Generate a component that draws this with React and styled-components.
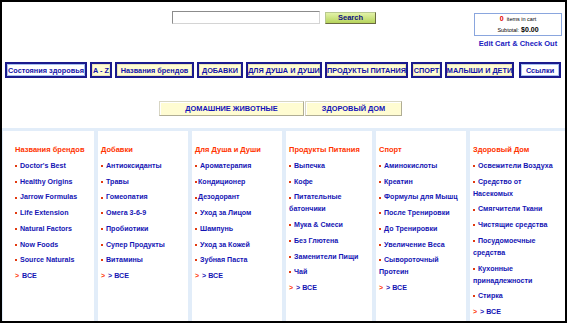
import React from "react";
import styled, { createGlobalStyle } from "styled-components";

const Global = createGlobalStyle`
  html, body { margin: 0; padding: 0; background: #fff; }
  body { font-family: "Liberation Sans", Arial, sans-serif; }
  * { box-sizing: border-box; }
`;

const Frame = styled.div`
  width: 567px;
  height: 323px;
  border: 2px solid #000;
  display: flex;
  flex-direction: column;
  overflow: hidden;
`;

const TopBar = styled.div`
  display: flex;
  align-items: flex-start;
  height: 60px;
  padding-top: 9px;
  flex: none;
`;

const SearchForm = styled.form`
  display: flex;
  align-items: center;
  gap: 5px;
  margin-left: 170px;
`;

const SearchInput = styled.input`
  width: 148px;
  height: 13px;
  border: 1px solid #8c8c8c;
  border-right-color: #d4d4d4;
  border-bottom-color: #d4d4d4;
  padding: 0;
  margin: 0;
  background: #fff;
`;

const SearchButton = styled.button`
  width: 51px;
  height: 12px;
  margin: 1px 0 0;
  padding: 0;
  border: 1px solid #6a6a40;
  border-top-color: #b8c890;
  border-left-color: #b8c890;
  background: linear-gradient(#e2f2a8, #b6d45c);
  font-family: "Liberation Sans", Arial, sans-serif;
  font-weight: bold;
  font-size: 7.5px;
  line-height: 10px;
  color: #101080;
`;

const CartArea = styled.div`
  margin-left: auto;
  margin-right: 3px;
  display: flex;
  flex-direction: column;
  align-items: center;
  padding-top: 2px;
`;

const CartBox = styled.div`
  width: 88px;
  height: 23px;
  border: 1px solid #8aa6de;
  display: flex;
  flex-direction: column;
  align-items: center;
  justify-content: center;
  gap: 1px;
  font-size: 5.5px;
  color: #000;
  line-height: 9px;
`;

const CartCount = styled.span`
  color: #e00000;
  font-weight: bold;
  font-size: 7px;
  margin-right: 3px;
`;

const CartMoney = styled.span`
  font-weight: bold;
  font-size: 7px;
  margin-left: 2px;
`;

const CartLink = styled.a`
  margin-top: 3px;
  font-size: 7.5px;
  font-weight: bold;
  color: #2020c0;
  text-decoration: none;
  line-height: 10px;
`;

const NavRow = styled.div`
  display: flex;
  align-items: center;
  gap: 3px;
  padding-left: 3px;
  height: 16px;
  flex: none;
`;

const NavButton = styled.a`
  display: flex;
  align-items: center;
  justify-content: center;
  flex: none;
  width: ${(p) => p.$w}px;
  height: 16px;
  padding: 0;
  border: 2px solid #1a1a8c;
  background: ${(p) => (p.$light ? "#fff" : "#fffcd2")};
  box-shadow: ${(p) => (p.$light ? "inset 0 0 0 1px #a9c2f0" : "inset 0 0 0 1px #e8e4b8")};
  font-size: 7.3px;
  font-weight: bold;
  color: #1212a8;
  white-space: nowrap;
  text-decoration: none;
  margin-left: ${(p) => p.$push || 0}px;
`;

const SubNavRow = styled.div`
  display: flex;
  margin-top: 23px;
  padding-left: 157px;
  gap: 1px;
  flex: none;
`;

const SubNavButton = styled.a`
  display: flex;
  align-items: center;
  justify-content: center;
  width: ${(p) => p.$w}px;
  height: 15px;
  border: 1px solid #b0ad94;
  border-top-color: #d8d6c4;
  border-left-color: #d8d6c4;
  background: #fffcd2;
  box-shadow: inset 1px 1px 0 #fff;
  font-size: 7.4px;
  font-weight: bold;
  color: #1212b8;
  text-decoration: none;
`;

const Columns = styled.div`
  margin-top: 12px;
  flex: 1;
  display: grid;
  grid-template-columns: 91px 90px 90px 86px 90px 1fr;
  column-gap: 4px;
  padding: 3px 0 0 1px;
  background: #e2edf9;
`;

const Column = styled.div`
  background: #fff;
  padding: 13px 4px 0 ${(p) => (p.$first ? 12 : 3)}px;
`;

const ColumnTitle = styled.div`
  color: #ff3300;
  font-weight: bold;
  font-size: 7.5px;
  line-height: 12px;
  margin-bottom: 4px;
  white-space: nowrap;
`;

const List = styled.ul`
  list-style: none;
  margin: 0;
  padding: 0;
  max-width: ${(p) => p.$max || 84}px;
`;

const Item = styled.li`
  font-size: 7.1px;
  font-weight: bold;
  line-height: 12px;
  margin-bottom: 3.71px;
  color: #1414b4;
`;

const Square = styled.span`
  display: inline-block;
  width: 2px;
  height: 2px;
  background: #e23a10;
  vertical-align: middle;
  margin-right: ${(p) => (p.$tight ? 1 : 3)}px;
`;

const Chevron = styled.span`
  color: #ff3300;
  font-size: 7px;
  margin-right: 3px;
`;

const columns = [
  {
    title: "Названия брендов",
    first: true,
    items: ["Doctor's Best", "Healthy Origins", "Jarrow Formulas", "Life Extension", "Natural Factors", "Now Foods", "Source Naturals"],
    all: "ВСЕ",
  },
  {
    title: "Добавки",
    items: ["Антиоксиданты", "Травы", "Гомеопатия", "Омега 3-6-9", "Пробиотики", "Супер Продукты", "Витамины"],
    all: "> ВСЕ",
  },
  {
    title: "Для Душа и Души",
    items: ["Ароматерапия", "Кондиционер", "Дезодорант", "Уход за Лицом", "Шампунь", "Уход за Кожей", "Зубная Паста"],
    tight: [1, 2],
    all: "> ВСЕ",
  },
  {
    title: "Продукты Питания",
    items: ["Выпечка", "Кофе", "Питательные батончики", "Мука & Смеси", "Без Глютена", "Заменители Пищи", "Чай"],
    all: "> ВСЕ",
    max: 80,
  },
  {
    title: "Спорт",
    items: ["Аминокислоты", "Креатин", "Формулы для Мышц", "После Тренировки", "До Тренировки", "Увеличение Веса", "Сывороточный Протеин"],
    all: "> ВСЕ",
  },
  {
    title: "Здоровый Дом",
    items: ["Освежители Воздуха", "Средство от Насекомых", "Смягчители Ткани", "Чистящие средства", "Посудомоечные средства", "Кухонные принадлежности", "Стирка"],
    all: "> ВСЕ",
  },
];

const navItems = [
  { label: "Состояния здоровья", light: true, w: 82 },
  { label: "A - Z", w: 22 },
  { label: "Названия брендов", w: 79 },
  { label: "ДОБАВКИ", w: 46 },
  { label: "ДЛЯ ДУША И ДУШИ", w: 76 },
  { label: "ПРОДУКТЫ ПИТАНИЯ", w: 83 },
  { label: "СПОРТ", w: 31 },
  { label: "МАЛЫШИ И ДЕТИ", w: 69 },
  { label: "Ссылки", light: true, w: 42, push: 2 },
];

export default function App() {
  return (
    <>
      <Global />
      <Frame>
        <TopBar>
          <SearchForm onSubmit={(e) => e.preventDefault()}>
            <SearchInput type="text" />
            <SearchButton type="submit">Search</SearchButton>
          </SearchForm>
          <CartArea>
            <CartBox>
              <div>
                <CartCount>0</CartCount>items in cart
              </div>
              <div>
                Subtotal:<CartMoney>$0.00</CartMoney>
              </div>
            </CartBox>
            <CartLink href="#">Edit Cart &amp; Check Out</CartLink>
          </CartArea>
        </TopBar>
        <NavRow>
          {navItems.map((n) => (
            <NavButton key={n.label} href="#" $light={n.light} $w={n.w} $push={n.push}>
              {n.label}
            </NavButton>
          ))}
        </NavRow>
        <SubNavRow>
          <SubNavButton href="#" $w={145}>ДОМАШНИЕ ЖИВОТНЫЕ</SubNavButton>
          <SubNavButton href="#" $w={97}>ЗДОРОВЫЙ ДОМ</SubNavButton>
        </SubNavRow>
        <Columns>
          {columns.map((c) => (
            <Column key={c.title} $first={c.first}>
              <ColumnTitle>{c.title}</ColumnTitle>
              <List $max={c.max}>
                {c.items.map((it, i) => (
                  <Item key={it}>
                    <Square $tight={c.tight && c.tight.includes(i)} />
                    {it}
                  </Item>
                ))}
                <Item>
                  <Chevron>&gt;</Chevron>
                  {c.all}
                </Item>
              </List>
            </Column>
          ))}
        </Columns>
      </Frame>
    </>
  );
}
